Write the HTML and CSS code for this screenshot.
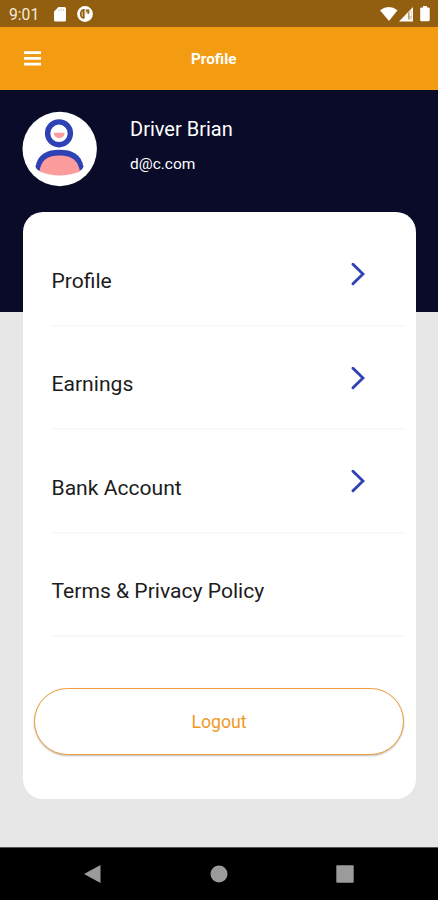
FILE: index.html
```html
<!DOCTYPE html>
<html lang="en">
<head>
<meta charset="utf-8">
<title>Profile</title>
<link rel="stylesheet" href="styles.css">
</head>
<body>
<div class="screen">
  <div class="status">
    <span class="time">9:01</span>
    <svg class="sd" width="12" height="15" viewBox="0 0 12 15"><path fill="#fff" d="M4.500 0H10.500A1.500 1.500 0 0 1 12 1.500V13a1.500 1.500 0 0 1-1.500 1.500h-9A1.500 1.500 0 0 1 0 13V4.500z"/><path stroke="#925f10" stroke-width=".8" opacity=".35" d="M5 2v2M7.200 2v2M9.400 2v2"/></svg>
    <svg class="app" width="16" height="16" viewBox="0 0 16 16"><circle cx="8" cy="8" r="7.900" fill="#fff"/><path fill="#925f10" d="M7.600 3v9.800H6C1.800 11.500 1.800 4.500 6 3zM8.800 3.500h3.500v4.300H8.800z"/><path fill="#fff" opacity=".7" d="M4.700 5.500h1v5h-1zM9 5.500h1.500v2.500H9z"/></svg>
    <span class="grow"></span>
    <svg class="wifi" width="18" height="14" viewBox="0 0 18 14"><path fill="#fff" d="M0 3.200Q9-3.200 17.500 3.200L9 14z"/></svg>
    <svg class="cell" width="15" height="15" viewBox="0 0 15 15"><path fill="#fff" d="M14 0V14.500H0z"/><path fill="#925f10" opacity=".6" d="M9 5.500 12.500 4v8.500H9z"/><path fill="#fff" d="M10.600 5h1.600v4.500h-1.600zM10.600 10.500h1.600v1.800h-1.600z"/></svg>
    <svg class="battery" width="10" height="16" viewBox="0 0 10 16"><path fill="#fff" d="M3 0h4v1.500h1.500A1.300 1.300 0 0 1 9.700 2.800V14a1.300 1.300 0 0 1-1.300 1.300H1.500A1.300 1.300 0 0 1 .2 14V2.800A1.300 1.300 0 0 1 1.500 1.500H3z"/></svg>
  </div>
  <header class="bar">
    <svg class="menu" width="17" height="15" viewBox="0 0 17 15"><path stroke="#fff" stroke-width="2.800" d="M0 1.700h17M0 7.400h17M0 13.100h17"/></svg>
    <h1 class="title">Profile</h1>
  </header>
  <section class="user">
    <svg class="avatar" width="76" height="76" viewBox="0 0 76 76">
      <circle cx="37.700" cy="38" r="37.200" fill="#fff"/>
      <circle cx="37" cy="22.300" r="11.400" fill="none" stroke="#2e41b5" stroke-width="5.400"/>
      <path fill="#fd9c9c" d="M31.800 21.800h10.800a5.400 5.400 0 0 1-10.800 0z"/>
      <path fill="#2e41b5" d="M13.500 55.500C16 43 25 38.800 37.500 38.800S59 43 61.500 55.500Q60.500 59 57 60H18Q14.500 59 13.500 55.500z"/>
      <path fill="#fd9c9c" d="M17.500 60.500C19 50 24.500 44.500 37.500 44.500S56 50 58 60.500Q37.500 68.500 17.500 60.500z"/>
    </svg>
    <div class="who"><div class="name">Driver Brian</div><div class="mail">d@c.com</div></div>
  </section>
  <main class="card">
    <div class="row"><span>Profile</span><svg class="chev" width="14" height="24" viewBox="0 0 14 24"><path d="M2 2.200 12 12 2 21.800"/></svg></div>
    <div class="row"><span>Earnings</span><svg class="chev" width="14" height="24" viewBox="0 0 14 24"><path d="M2 2.200 12 12 2 21.800"/></svg></div>
    <div class="row"><span>Bank Account</span><svg class="chev" width="14" height="24" viewBox="0 0 14 24"><path d="M2 2.200 12 12 2 21.800"/></svg></div>
    <div class="row"><span>Terms &amp; Privacy Policy</span></div>
    <button class="logout">Logout</button>
  </main>
  <nav class="nav">
    <svg width="18" height="20" viewBox="0 0 18 20"><path fill="#9b9b9b" d="M16.500 1v18L0 10z"/></svg>
    <svg width="18" height="18" viewBox="0 0 18 18"><circle cx="9" cy="9" r="8.500" fill="#9b9b9b"/></svg>
    <svg width="18" height="18" viewBox="0 0 18 18"><rect x=".3" y=".3" width="17.400" height="17.400" rx="1" fill="#9b9b9b"/></svg>
  </nav>
</div>
</body>
</html>
```
FILE: styles.css
```css
* { box-sizing: border-box; }
body { margin: 0; font-family: Roboto, sans-serif; }
svg { display: block; flex: none; }
.screen {
  width: 438px; height: 900px; overflow: hidden;
  display: flex; flex-direction: column;
  background: linear-gradient(#090b29 312px, #e7e7e7 312px);
}
.status {
  height: 27px; flex: none; display: flex; align-items: center;
  background: #925f10; padding: 1px 8px 0 9px; color: #fff;
}
.time { font-size: 15.700px; line-height: 26px; width: 45px; padding-top: 1px; color: #f6ead9; }
.app { margin-left: 11px; }
.grow { flex: 1; }
.cell { margin-left: 1px; }
.battery { margin-left: 6px; }
.bar {
  height: 63px; flex: none; display: grid; align-items: center;
  grid-template-columns: 167.500px auto; padding-left: 23.500px; background: #f39c12;
}
.title { margin: 0; color: #fff; font-size: 15.300px; font-weight: 700; }
.user { height: 122px; flex: none; display: flex; padding: 20.500px 0 0 22px; color: #fff; }
.who { margin-left: 32px; padding-top: 5px; }
.name { font-size: 20px; line-height: 27px; }
.mail { font-size: 15.500px; line-height: 22px; margin-top: 10px; }
.card {
  width: 393px; height: 587px; flex: none; margin-left: 23px;
  padding: 11px 11px 0; background: #fff; border-radius: 20px;
}
.row {
  height: 103.500px; margin-left: 18px; border-bottom: 2px solid #f8f9f9;
  display: flex; justify-content: space-between; align-items: center;
  padding: 13px 40px 0 0; font-size: 21.100px; color: #1c1c1c;
}
.row span { margin-left: -0.500px; }
.chev { fill: none; stroke: #2e41b5; stroke-width: 2.900; stroke-linecap: round; margin-top: -12px; }
.logout {
  display: block; width: 370px; height: 67px; margin-top: 50.500px; padding: 2px 0 0;
  border: 1px solid #ee9d38; border-radius: 34px; background: #fff;
  box-shadow: 0 1px 2px #0004; color: #ef991f; font: 17.700px Roboto, sans-serif;
}
.nav {
  height: 53px; flex: none; margin-top: auto; background: #000;
  display: flex; align-items: center; justify-content: space-between; padding: 0 84px;
  border-top: 1px solid #555;
}
```
